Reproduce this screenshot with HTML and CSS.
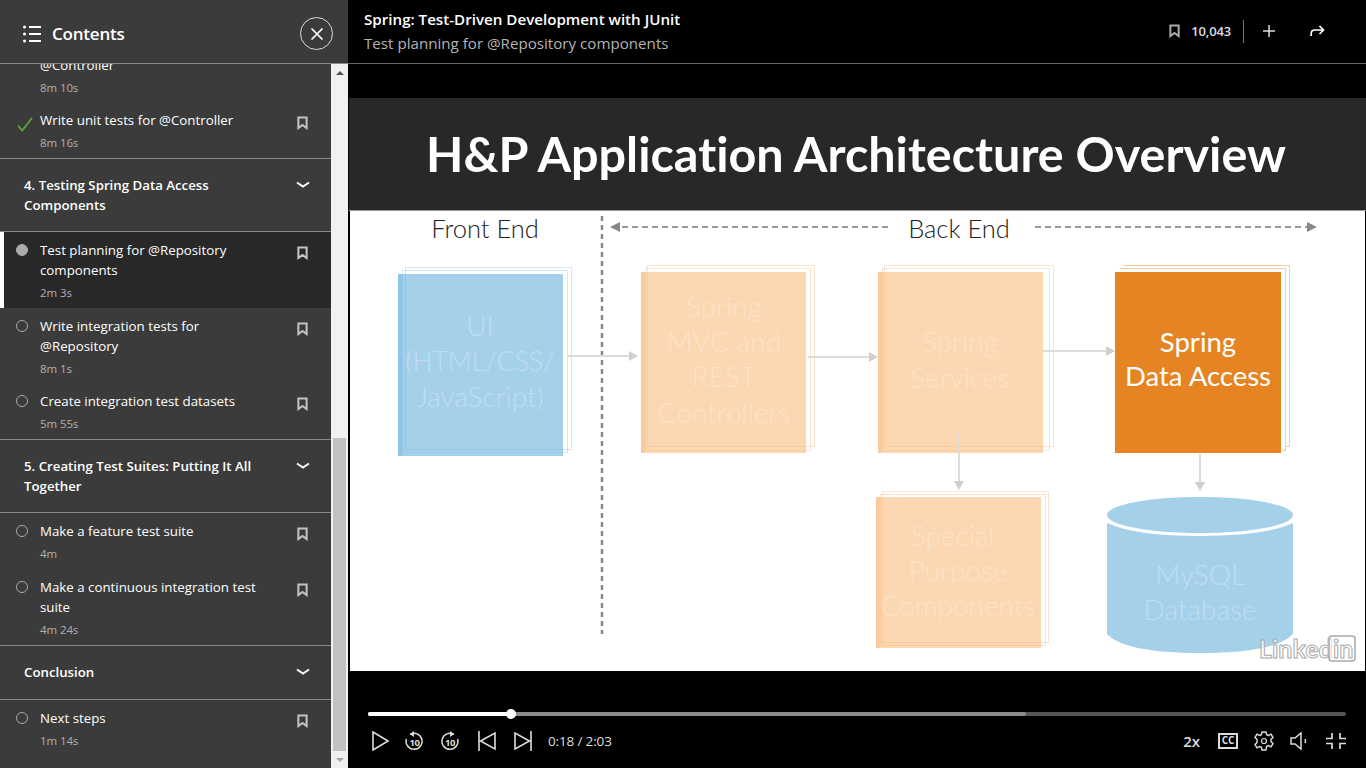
FILE: index.html
```html
<!DOCTYPE html>
<html>
<head>
<title>Test planning for @Repository components</title>
<link rel="stylesheet" href="styles.css">
</head>
<body>

<svg class="defs" width="0" height="0">
  <symbol id="mark" viewBox="0 0 12 15">
    <path d="M1.500 1.500h9v11.500L6 9.600 1.500 13z" fill="none" stroke="currentColor" stroke-width="2.200"/>
  </symbol>
  <symbol id="chevron" viewBox="0 0 14 8">
    <path d="M1 1.500l6 4 6-4" fill="none" stroke="currentColor" stroke-width="2"/>
  </symbol>
</svg>

<aside class="sidebar">
  <header class="side-head">
    <svg class="list-icon" width="18" height="18" viewBox="0 0 18 18">
      <circle cx="1.500" cy="2" r="1.500"/><circle cx="1.500" cy="9" r="1.500"/><circle cx="1.500" cy="16" r="1.500"/>
      <path d="M6 2h12M6 9h12M6 16h12" stroke="#fff" stroke-width="2"/>
    </svg>
    <span class="side-title">Contents</span>
    <button class="close-btn">
      <svg width="14" height="14" viewBox="0 0 14 14"><path d="M1.500 1.500l11 11M12.500 1.500l-11 11" stroke="#fff" stroke-width="1.700"/></svg>
    </button>
  </header>

  <div class="side-body">
    <div class="toc">
      <div class="toc-inner">
        <div class="group">
          <div class="item">
            <span class="state"></span>
            <div class="info"><div class="name">@Controller</div><div class="len">8m 10s</div></div>
          </div>
          <div class="item">
            <span class="state"><svg width="16" height="15" viewBox="0 0 16 15"><path d="M1 8.500l4.200 5L15 1" fill="none" stroke="#5aa63a" stroke-width="1.800"/></svg></span>
            <div class="info"><div class="name">Write unit tests for @Controller</div><div class="len">8m 16s</div></div>
            <svg class="mark"><use href="#mark"/></svg>
          </div>
        </div>

        <div class="group">
          <div class="chapter">
            <span>4. Testing Spring Data Access Components</span>
            <svg class="chevron"><use href="#chevron"/></svg>
          </div>
        </div>
        <div class="group">
          <div class="item active">
            <span class="state"><i class="dot filled"></i></span>
            <div class="info"><div class="name">Test planning for @Repository components</div><div class="len">2m 3s</div></div>
            <svg class="mark"><use href="#mark"/></svg>
          </div>
          <div class="item">
            <span class="state"><i class="dot"></i></span>
            <div class="info"><div class="name">Write integration tests for @Repository</div><div class="len">8m 1s</div></div>
            <svg class="mark"><use href="#mark"/></svg>
          </div>
          <div class="item">
            <span class="state"><i class="dot"></i></span>
            <div class="info"><div class="name">Create integration test datasets</div><div class="len">5m 55s</div></div>
            <svg class="mark"><use href="#mark"/></svg>
          </div>
        </div>

        <div class="group">
          <div class="chapter">
            <span>5. Creating Test Suites: Putting It All Together</span>
            <svg class="chevron"><use href="#chevron"/></svg>
          </div>
        </div>
        <div class="group">
          <div class="item">
            <span class="state"><i class="dot"></i></span>
            <div class="info"><div class="name">Make a feature test suite</div><div class="len">4m</div></div>
            <svg class="mark"><use href="#mark"/></svg>
          </div>
          <div class="item">
            <span class="state"><i class="dot"></i></span>
            <div class="info"><div class="name">Make a continuous integration test suite</div><div class="len">4m 24s</div></div>
            <svg class="mark"><use href="#mark"/></svg>
          </div>
        </div>

        <div class="group">
          <div class="chapter one-line">
            <span>Conclusion</span>
            <svg class="chevron"><use href="#chevron"/></svg>
          </div>
        </div>
        <div class="group last">
          <div class="item">
            <span class="state"><i class="dot"></i></span>
            <div class="info"><div class="name">Next steps</div><div class="len">1m 14s</div></div>
            <svg class="mark"><use href="#mark"/></svg>
          </div>
        </div>
      </div>
    </div>

    <div class="scrollbar">
      <span class="arrow up"></span>
      <div class="track"><div class="thumb"></div></div>
      <span class="arrow down"></span>
    </div>
  </div>
</aside>

<main class="player">
  <header class="top-bar">
    <div class="course">
      <div class="course-name">Spring: Test-Driven Development with JUnit</div>
      <div class="video-name">Test planning for @Repository components</div>
    </div>
    <div class="top-actions">
      <svg class="top-mark"><use href="#mark"/></svg>
      <span class="count">10,043</span>
      <span class="divider"></span>
      <svg class="plus" width="12" height="12" viewBox="0 0 12 12"><path d="M6 0v12M0 6h12" stroke="#ddd" stroke-width="1.500"/></svg>
      <svg class="share" width="16" height="12" viewBox="0 0 16 12"><path d="M1.200 11V8.500Q1.200 5 5 5H13M9.500 1l4 4-4 4" fill="none" stroke="#fff" stroke-width="1.700"/></svg>
    </div>
  </header>

  <div class="stage">
    <svg class="slide" viewBox="349 98 1017 573" width="1017" height="573">
      <rect class="slide-bg" x="350" y="98" width="1015" height="573"/>
      <rect class="slide-band" x="349" y="98" width="1017" height="112"/>
      <rect class="band-edge" x="349" y="210" width="1017" height="1"/>
      <text class="slide-title" x="856" y="172">H&amp;P Application Architecture Overview</text>

      <text class="label" x="485" y="238">Front End</text>
      <text class="label" x="959" y="238">Back End</text>
      <path class="split" d="M602 216V634"/>
      <path class="dash" d="M622 227H892M1035 227H1308"/>
      <path class="dash-head" d="M610 227l10-5v10zM1317 227l-10-5v10z"/>

      <rect class="box-blue" x="398" y="274" width="165" height="182"/>
      <rect class="strip-blue" x="398" y="274" width="4" height="182"/>
      <g class="layers-blue">
        <rect x="405.500" y="267.500" width="166" height="182"/>
        <rect x="402.500" y="270.500" width="165" height="182"/>
      </g>
      <text class="box-text" x="480" y="336">UI</text>
      <text class="box-text narrow" x="480" y="371">(HTML/CSS/</text>
      <text class="box-text" x="480" y="407">JavaScript)</text>

      <rect class="box-orange" x="641" y="272" width="165" height="181"/>
      <rect class="strip-orange" x="641" y="272" width="4" height="181"/>
      <rect class="box-orange" x="878" y="272" width="165" height="181"/>
      <rect class="strip-orange" x="878" y="272" width="4" height="181"/>
      <rect class="box-orange" x="876" y="497" width="165" height="151"/>
      <rect class="strip-orange" x="876" y="497" width="4" height="151"/>
      <rect class="box-solid" x="1115" y="272" width="166" height="181"/>
      <g class="layers-orange">
        <rect x="647.500" y="265.500" width="167" height="181"/>
        <rect x="645.500" y="268.500" width="165" height="182"/>
        <rect x="884.500" y="265.500" width="169" height="181"/>
        <rect x="882.500" y="268.500" width="167" height="182"/>
        <rect x="882.500" y="491.500" width="166" height="151"/>
        <rect x="880.500" y="494.500" width="165" height="151"/>
      </g>
      <g class="layers-solid">
        <path d="M1123.500 265.500H1289.500V446.500H1285.500M1119.500 268.500H1285.500V450.500H1281.500"/>
      </g>

      <text class="box-text" x="724" y="317">Spring</text>
      <text class="box-text" x="724" y="352">MVC and</text>
      <text class="box-text" x="724" y="387">REST</text>
      <text class="box-text" x="724" y="423">Controllers</text>

      <text class="box-text" x="960" y="352">Spring</text>
      <text class="box-text" x="960" y="388">Services</text>

      <text class="box-text solid" x="1198" y="352">Spring</text>
      <text class="box-text solid" x="1198" y="386">Data Access</text>

      <text class="box-text" x="958" y="546">Special-</text>
      <text class="box-text" x="958" y="581">Purpose</text>
      <text class="box-text" x="958" y="616">Components</text>

      <path class="cyl" d="M1107 523Q1135 536 1200 536T1293 523V634Q1275 653 1200 653T1107 634z"/>
      <ellipse class="cyl" cx="1200" cy="515" rx="93" ry="18"/>
      <text class="box-text" x="1200" y="585">MySQL</text>
      <text class="box-text" x="1200" y="620">Database</text>

      <path class="link" d="M567 356H630M808 357H870M1043 351H1107M959 433V482M1200 454V483"/>
      <path class="link-head" d="M638 356l-9-5v10zM878 357l-9-5v10zM1115 351l-9-5v10zM959 490l-5-9h10zM1200 491l-5-9h10z"/>

      <text class="wm" x="1259" y="658">Linked</text>
      <rect class="wm-box" x="1329" y="636" width="26" height="25" rx="3"/>
      <text class="wm" x="1333" y="658">in</text>
    </svg>
  </div>

  <div class="controls">
    <div class="progress">
      <div class="buffered"></div>
      <div class="played"></div>
      <span class="knob"></span>
    </div>
    <div class="buttons">
      <svg class="ctl" width="18" height="20" viewBox="0 0 18 20"><path d="M1 1l15 9L1 19z" fill="none" stroke="#ddd" stroke-width="1.600"/></svg>
      <svg class="ctl replay" width="18" height="20" viewBox="0 0 18 20">
        <path d="M5 3.400A8 8 0 1 1 1.400 8" fill="none" stroke="#ddd" stroke-width="1.500"/>
        <path d="M9 0v6L5 3.300z" fill="#ddd"/>
        <text class="ten" x="9.500" y="15">10</text>
      </svg>
      <svg class="ctl forward" width="18" height="20" viewBox="0 0 18 20">
        <path d="M13 3.400A8 8 0 1 0 16.600 8" fill="none" stroke="#ddd" stroke-width="1.500"/>
        <path d="M9 0v6l4-2.700z" fill="#ddd"/>
        <text class="ten" x="9" y="15">10</text>
      </svg>
      <svg class="ctl prev" width="18" height="20" viewBox="0 0 18 20"><path d="M1 0v20M17 2v16L2.500 10z" fill="none" stroke="#ddd" stroke-width="1.600"/></svg>
      <svg class="ctl next" width="18" height="20" viewBox="0 0 18 20"><path d="M17 0v20M1 2v16l14.500-8z" fill="none" stroke="#ddd" stroke-width="1.600"/></svg>
      <span class="clock">0:18 / 2:03</span>
      <span class="speed">2x</span>
      <span class="cc">CC</span>
      <svg class="ctl gear" width="20" height="20" viewBox="0 0 20 20">
        <path d="M8 1h4l.6 2.700 1.800.8L17 3.200l2 3.300-2 1.900v2.200l2 1.900-2 3.300-2.600-1.300-1.800.8L12 19H8l-.6-2.700-1.800-.8L3 16.800l-2-3.300 2-1.900V8.400l-2-1.900 2-3.300 2.600 1.300 1.800-.8z" fill="none" stroke="#ddd" stroke-width="1.400"/>
        <circle cx="10" cy="10" r="2.500" fill="none" stroke="#ddd" stroke-width="1.200"/>
      </svg>
      <svg class="ctl volume" width="18" height="18" viewBox="0 0 18 18"><path d="M1 6h4l6-5v16l-6-5H1zM15 7q1 2 0 4" fill="none" stroke="#ddd" stroke-width="1.500"/></svg>
      <svg class="ctl shrink" width="20" height="16" viewBox="0 0 20 16"><path d="M6 0v5.500H0M14 0v5.500h6M6 16v-5.500H0M14 16v-5.500h6" fill="none" stroke="#ddd" stroke-width="1.700"/></svg>
    </div>
  </div>
</main>

</body>
</html>
```
FILE: styles.css
```css
* {
  box-sizing: border-box;
}

body {
  margin: 0;
  height: 100vh;
  overflow: hidden;
  display: flex;
  background-color: #000;
  font-family: "Open Sans", sans-serif;
  color: #fff;
}

.defs {
  display: none;
}

/* Sidebar */
.sidebar {
  width: 348px;
  flex: none;
  display: flex;
  flex-direction: column;
  background-color: #3b3b3b;
}

.side-head {
  height: 64px;
  flex: none;
  display: flex;
  align-items: center;
  padding: 8px 15px 4px 23px;
  border-bottom: 1px solid #8a8a8a;
}

.list-icon {
  fill: #fff;
  margin-right: 11px;
}

.side-title {
  flex: 1;
  font-size: 17px;
  font-weight: 600;
  letter-spacing: -0.2px;
}

.close-btn {
  width: 33px;
  height: 33px;
  padding: 0;
  display: flex;
  align-items: center;
  justify-content: center;
  background: none;
  border: 1px solid #ddd;
  border-radius: 50%;
}

.side-body {
  flex: 1;
  min-height: 0;
  display: flex;
}

.toc {
  width: 331px;
  overflow: hidden;
}

/* list is scrolled down a bit, the first row is cut off by the header */
.toc-inner {
  margin-top: -17.44px;
}

.group {
  border-bottom: 1px solid #8a8a8a;
}

.group.last {
  border-bottom: none;
}

.chapter {
  display: flex;
  justify-content: space-between;
  padding: 16px 21px 16px 24px;
  font-size: 13.25px;
  line-height: 20px;
  font-weight: 600;
}

.chapter.one-line {
  padding-bottom: 17px;
}

.chapter span {
  width: 240px;
}

.chevron {
  width: 14px;
  height: 8px;
  margin-top: 6px;
  color: #fff;
}

.item {
  display: flex;
  padding: 8px 23px 5px 0;
  border-left: 4px solid transparent;
}

.item.active {
  background-color: #282828;
  border-left-color: #fff;
}

.state {
  width: 36px;
  flex: none;
  padding-left: 12px;
  padding-top: 4px;
}

.state svg {
  display: block;
  margin: 3px 0 0 1px;
}

.dot {
  display: block;
  width: 12px;
  height: 12px;
  border: 1px solid #aaa;
  border-radius: 50%;
}

.dot.filled {
  background-color: #aaa;
}

.info {
  flex: 1;
  min-width: 0;
}

.name {
  font-size: 13.3px;
  line-height: 20px;
  padding-right: 28px;
}

.len {
  margin-top: 3px;
  font-size: 11.5px;
  line-height: 19.72px;
  color: #b0b0b0;
  letter-spacing: -0.1px;
}

.mark {
  width: 11px;
  height: 14px;
  flex: none;
  margin-top: 6px;
  color: #c4c4c4;
}

/* Scrollbar */
.scrollbar {
  width: 17px;
  display: flex;
  flex-direction: column;
  background-color: #f1f1f1;
}

.arrow {
  height: 17px;
  flex: none;
  display: flex;
  align-items: center;
  justify-content: center;
}

.arrow::before {
  content: "";
  border-left: 4px solid transparent;
  border-right: 4px solid transparent;
}

.arrow.up::before {
  border-bottom: 4px solid #505050;
}

.arrow.down::before {
  border-top: 4px solid #a3a3a3;
}

.track {
  flex: 1;
  display: flex;
  flex-direction: column;
  justify-content: flex-end;
  padding: 0 2px;
}

.thumb {
  height: 313px;
  background-color: #c1c1c1;
}

/* Player */
.player {
  flex: 1;
  min-width: 0;
  display: flex;
  flex-direction: column;
}

.top-bar {
  height: 64px;
  flex: none;
  display: flex;
  justify-content: space-between;
  padding: 8px 40px 0 16px;
  border-bottom: 1px solid #666;
}

.course-name {
  font-size: 15.15px;
  line-height: 22px;
  font-weight: 600;
}

.video-name {
  margin-top: 2px;
  font-size: 15.15px;
  line-height: 22px;
  color: #b4b4b4;
}

.top-actions {
  display: flex;
  align-items: center;
  height: 46px;
}

.top-mark {
  width: 11px;
  height: 14px;
  margin-right: 11px;
  color: #aaa;
}

.count {
  font-size: 13px;
  font-weight: 600;
  color: #ddd;
  letter-spacing: -0.15px;
}

.divider {
  width: 1px;
  height: 23px;
  margin: 0 19px 0 12px;
  background-color: #777;
}

.plus {
  margin-right: 35px;
}

.stage {
  flex: none;
  padding: 34px 0 0 1px;
}

.slide {
  display: block;
}

/* Slide drawing */
.slide-bg {
  fill: #fff;
}

.slide-band {
  fill: #262829;
}

.band-edge {
  fill: #999;
}

.slide-title {
  font-family: Lato, sans-serif;
  font-size: 48.5px;
  font-weight: 700;
  font-variant-ligatures: none;
  fill: #fff;
  text-anchor: middle;
}

.label {
  font-family: Lato, sans-serif;
  font-size: 25.5px;
  font-weight: 300;
  fill: #222;
  text-anchor: middle;
}

.split {
  stroke: #888;
  stroke-width: 2.5;
  stroke-dasharray: 5 4;
  fill: none;
}

.dash {
  stroke: #999;
  stroke-width: 2;
  stroke-dasharray: 6 4;
  fill: none;
}

.dash-head {
  fill: #888;
}

.layers-blue rect {
  fill: none;
  stroke: #7fbde3;
  stroke-opacity: 0.35;
}

.layers-orange rect {
  fill: none;
  stroke: #f5b272;
  stroke-opacity: 0.35;
}

.layers-solid path {
  fill: none;
  stroke: #f2b77c;
  stroke-opacity: 0.7;
}

.box-blue {
  fill: #a5d0ea;
}

.strip-blue {
  fill: #8fc6e8;
}

.box-orange {
  fill: #fbd7b2;
}

.strip-orange {
  fill: #f9cb9c;
}

.box-solid {
  fill: #e68423;
}

.box-text {
  font-family: Lato, sans-serif;
  font-size: 28px;
  font-weight: 300;
  fill: #fff;
  fill-opacity: 0.3;
  text-anchor: middle;
}

.box-text.narrow {
  font-size: 26.5px;
}

.box-text.solid {
  font-size: 27.5px;
  font-weight: 400;
  fill-opacity: 1;
}

.cyl {
  fill: #a5d0ea;
}

.link {
  stroke: #dcdcdc;
  stroke-width: 2;
  fill: none;
}

.link-head {
  fill: #cfcfcf;
}

.wm {
  font-family: Lato, sans-serif;
  font-size: 25px;
  font-weight: 700;
  fill: #fff;
  fill-opacity: 0.7;
  stroke: #a9a9a9;
  stroke-width: 1;
}

.wm-box {
  fill: #fff;
  fill-opacity: 0.5;
  stroke: #a9a9a9;
  stroke-width: 1.5;
}

/* Controls */
.controls {
  flex: 1;
  padding: 41px 20px 0;
}

.progress {
  position: relative;
  height: 4px;
  border-radius: 2px;
  background-color: #555;
}

.buffered {
  width: 658px;
  height: 4px;
  border-radius: 2px;
  background-color: #8b8b8b;
}

.played {
  position: absolute;
  left: 0;
  top: 0;
  width: 143px;
  height: 4px;
  border-radius: 2px;
  background-color: #fff;
}

.knob {
  position: absolute;
  left: 138px;
  top: -3px;
  width: 10px;
  height: 10px;
  border-radius: 50%;
  background-color: #fff;
}

.buttons {
  display: flex;
  align-items: center;
  height: 20px;
  margin-top: 15px;
  padding-left: 4px;
}

.ctl {
  flex: none;
}

.replay {
  margin-left: 15px;
}

.forward {
  margin-left: 18px;
}

.prev {
  margin-left: 19px;
}

.next {
  margin-left: 18px;
}

.ten {
  font-size: 9.5px;
  font-weight: 700;
  letter-spacing: -0.5px;
  fill: #ddd;
  text-anchor: middle;
  font-family: "Open Sans", sans-serif;
}

.clock {
  flex: 1;
  margin-left: 16px;
  font-size: 13.5px;
  color: #ddd;
  letter-spacing: -0.15px;
}

.speed {
  font-size: 15px;
  font-weight: 600;
  color: #ddd;
}

.cc {
  width: 20px;
  height: 16px;
  margin-left: 18px;
  border: 2px solid #ddd;
  font-size: 10px;
  line-height: 11px;
  font-weight: 700;
  text-align: center;
  color: #ddd;
}

.gear {
  margin-left: 16px;
}

.volume {
  margin-left: 16px;
}

.shrink {
  margin-left: 18px;
}
```
